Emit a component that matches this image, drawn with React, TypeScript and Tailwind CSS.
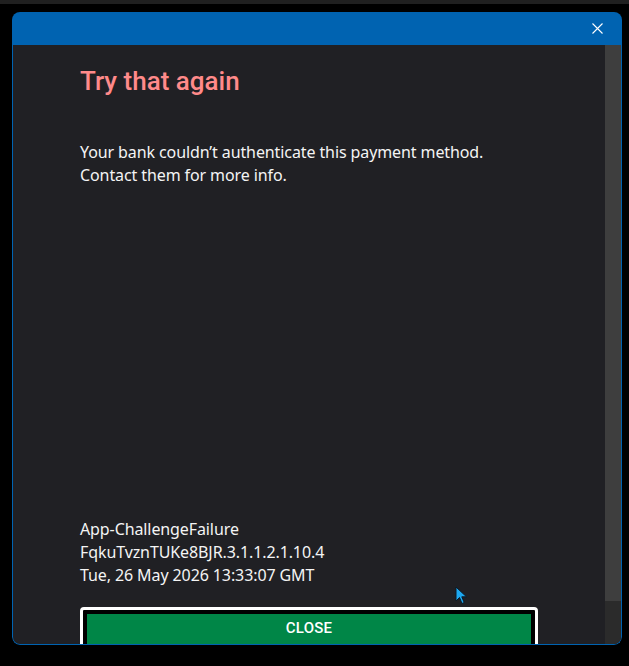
import React from "react";

export default function App() {
  const body = { fontFamily: '"Noto Sans", "Open Sans", sans-serif' };
  const din = { fontFamily: 'Roboto, "DejaVu Sans", sans-serif' };
  return (
    <div className="relative w-[629px] h-[666px] bg-black overflow-hidden">
      <div className="h-[4px] bg-[#202020]" />
      <div className="ml-[12px] mt-[8px] w-[610px] h-[633px] flex flex-col rounded-[8px] overflow-hidden">
        <div className="h-[33px] bg-[#0063b1] flex items-center justify-end pr-[19px] shrink-0">
          <svg width="11" height="11" viewBox="0 0 11 11">
            <path d="M0.5 0.5 L10.5 10.5 M10.5 0.5 L0.5 10.5" stroke="#ffffff" strokeWidth="1.1" />
          </svg>
        </div>
        <div className="flex-1 flex bg-[#202024] border border-t-0 border-[#0063b1] rounded-b-[8px] overflow-hidden min-h-0">
          <div className="flex-1 overflow-hidden pl-[67px] pr-[60px] flex flex-col">
            <h1 className="mt-[19px] text-[26px] leading-[34px] text-[#ff8a8a] font-medium" style={din}>
              Try that again
            </h1>
            <p className="mt-[43px] text-[16px] leading-[23px] text-[#f4f4f4] tracking-[-0.1px]" style={body}>
              Your bank couldn’t authenticate this payment method.
              <br />
              Contact them for more info.
            </p>
            <div className="mt-[331px] text-[16px] leading-[23px] text-[#f4f4f4] tracking-[-0.1px]" style={body}>
              <div>App-ChallengeFailure</div>
              <div>FqkuTvznTUKe8BJR.3.1.1.2.1.10.4</div>
              <div>Tue, 26 May 2026 13:33:07 GMT</div>
            </div>
            <div className="mt-[20px] w-[458px] border-[3px] border-white rounded-[4px] bg-black p-[4px] shrink-0">
              <div className="h-[36px] bg-[#008647] flex items-start justify-center pt-[5px]">
                <span className="text-[15px] leading-[18px] font-medium text-white tracking-[0.2px]" style={din}>CLOSE</span>
              </div>
            </div>
          </div>
          <div className="w-[16px] bg-[#2b2b2b] flex flex-col shrink-0">
            <div className="h-[556px] bg-[#3e3e3e]" />
          </div>
        </div>
      </div>
      <svg className="absolute left-[455px] top-[586px]" width="14" height="20" viewBox="0 0 14 20">
        <path d="M1 1 L1 15 L4.5 11.5 L7 17.5 L9.2 16.5 L6.8 10.8 L11.5 10.8 Z" fill="#1ea8f0" stroke="#0a1a28" strokeWidth="1" strokeLinejoin="miter" />
      </svg>
    </div>
  );
}
